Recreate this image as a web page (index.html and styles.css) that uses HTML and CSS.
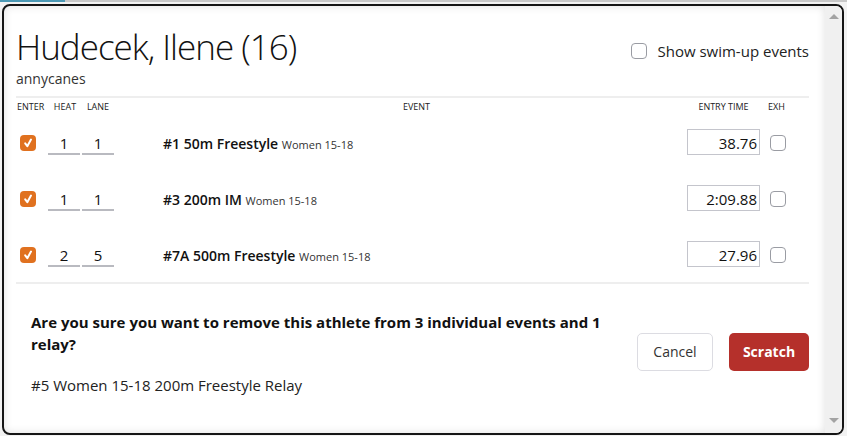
FILE: index.html
```html
<!DOCTYPE html>
<html lang="en">
<head>
    <meta charset="UTF-8">
    <meta name="viewport" content="width=device-width, initial-scale=1.0">
    <title>Scratch Athlete</title>
    <link rel="stylesheet" href="styles.css">
</head>
<body>
    <div class="topbar"><span class="topbar-accent"></span></div>

    <div class="window">
        <div class="modal">
            <div class="modal-head">
                <div>
                    <h1 class="athlete-name">Hudecek, Ilene (16)</h1>
                    <div class="team">annycanes</div>
                </div>
                <label class="swimup"><span class="box"></span>Show swim-up events</label>
            </div>

            <div class="entries">
                <div class="entry-row header">
                    <span class="col-enter">Enter</span>
                    <span class="col-center">Heat</span>
                    <span class="col-center">Lane</span>
                    <span></span>
                    <span class="col-event">Event</span>
                    <span class="col-center">Entry Time</span>
                    <span class="col-exh">Exh</span>
                </div>

                <div class="entry-row">
                    <span class="check checked"><svg viewBox="0 0 16 16"><path d="M5.2 8.4 L7.3 11.2 L11 4.6"/></svg></span>
                    <input class="seed heat" type="text" value="1">
                    <input class="seed" type="text" value="1">
                    <span></span>
                    <span class="event-name">#1 50m Freestyle <small>Women 15-18</small></span>
                    <input class="entry-time" type="text" value="38.76">
                    <span class="check exh"></span>
                </div>

                <div class="entry-row">
                    <span class="check checked"><svg viewBox="0 0 16 16"><path d="M5.2 8.4 L7.3 11.2 L11 4.6"/></svg></span>
                    <input class="seed heat" type="text" value="1">
                    <input class="seed" type="text" value="1">
                    <span></span>
                    <span class="event-name">#3 200m IM <small>Women 15-18</small></span>
                    <input class="entry-time" type="text" value="2:09.88">
                    <span class="check exh"></span>
                </div>

                <div class="entry-row">
                    <span class="check checked"><svg viewBox="0 0 16 16"><path d="M5.2 8.4 L7.3 11.2 L11 4.6"/></svg></span>
                    <input class="seed heat" type="text" value="2">
                    <input class="seed" type="text" value="5">
                    <span></span>
                    <span class="event-name">#7A 500m Freestyle <small>Women 15-18</small></span>
                    <input class="entry-time" type="text" value="27.96">
                    <span class="check exh"></span>
                </div>
            </div>

            <div class="confirm">
                <div class="confirm-text">
                    <p class="question">Are you sure you want to remove this athlete from 3 individual events and 1 relay?</p>
                    <p class="relay">#5 Women 15-18 200m Freestyle Relay</p>
                </div>
                <div class="actions">
                    <button class="btn btn-cancel">Cancel</button>
                    <button class="btn btn-scratch">Scratch</button>
                </div>
            </div>
        </div>

        <div class="scrollbar">
            <span class="arrow up"></span>
            <span class="arrow down"></span>
        </div>
    </div>
</body>
</html>
```

FILE: styles.css
```css
* {
    box-sizing: border-box;
}

body {
    margin: 0;
    padding: 0;
    background-color: #f2f2f2;
    font-family: "Open Sans", "Noto Sans", sans-serif;
    color: #222;
}

.topbar {
    height: 2px;
    background-color: #c8c8c8;
    display: flex;
}

.topbar-accent {
    width: 65px;
    background-color: #4b98b4;
}

.window {
    margin: 2px 0 0 2px;
    width: 842px;
    height: 431px;
    border: 2px solid #151515;
    border-radius: 8px;
    background-color: #fff;
    display: flex;
    overflow: hidden;
}

.modal {
    flex: 1;
    padding: 21px 16px 0 12px;
    box-shadow: inset 0 0 8px rgba(0, 0, 0, 0.13);
}

/* header */
.modal-head {
    display: flex;
    justify-content: space-between;
    align-items: flex-start;
    padding-bottom: 8px;
    border-bottom: 2px solid #eee;
}

.athlete-name {
    margin: 0;
    font-size: 35px;
    line-height: 40px;
    font-weight: 300;
    letter-spacing: -1px;
    color: #111;
}

.team {
    margin-top: 3px;
    font-size: 14px;
    line-height: 18px;
    color: #333;
}

.swimup {
    display: flex;
    align-items: center;
    gap: 10px;
    margin-top: 13px;
    font-size: 15px;
    line-height: 22px;
    color: #222;
}

.swimup .box {
    width: 16px;
    height: 16px;
    border: 1.5px solid #9a9ca3;
    border-radius: 4px;
}

/* entries */
.entries {
    border-bottom: 2px solid #eee;
}

.entry-row {
    display: grid;
    grid-template-columns: 32px 34px 32px 49px 1fr 73px 49px;
    align-items: center;
    height: 56px;
}

.entry-row.header {
    height: 16px;
    font-size: 9px;
    text-transform: uppercase;
    color: #222;
}

.col-enter {
    padding-left: 1px;
}

.col-center {
    text-align: center;
}

.col-event {
    text-align: center;
    padding-right: 17px;
}

.col-exh {
    padding-left: 8px;
}

.check {
    width: 16px;
    height: 16px;
    border-radius: 4px;
    margin-top: 1px;
}

.check.checked {
    margin-left: 4px;
    background-color: #e0711f;
}

.check svg {
    display: block;
    width: 16px;
    height: 16px;
    fill: none;
    stroke: #fff;
    stroke-width: 2;
    stroke-linecap: round;
    stroke-linejoin: round;
}

.check.exh {
    margin-left: 10px;
    border: 1.5px solid #9a9ca3;
}

.seed {
    width: 32px;
    height: 26px;
    padding: 4px 0 0;
    border: none;
    border-bottom: 2px solid #b9bac0;
    background: transparent;
    font-family: inherit;
    font-size: 15px;
    color: #111;
    text-align: center;
}

.event-name {
    padding-top: 2px;
    font-size: 14px;
    font-weight: 600;
    color: #111;
}

.event-name small {
    font-size: 11px;
    font-weight: 400;
    color: #333;
}

.entry-time {
    width: 73px;
    height: 26px;
    padding: 2px 2px 0 0;
    border: 1px solid #c4c5cc;
    font-family: inherit;
    font-size: 15px;
    color: #111;
    text-align: right;
}

/* confirmation */
.confirm {
    display: flex;
    align-items: center;
    padding: 27px 0 0 15px;
}

.confirm-text {
    flex: 1;
    padding-right: 16px;
}

.question {
    margin: 0;
    font-size: 15px;
    line-height: 22px;
    font-weight: 700;
    color: #111;
}

.relay {
    margin: 19px 0 0;
    font-size: 15px;
    line-height: 22px;
    color: #222;
}

.actions {
    display: flex;
    gap: 16px;
    margin-top: -4px;
}

.btn {
    height: 38px;
    border-radius: 5px;
    font-family: inherit;
    font-size: 14px;
}

.btn-cancel {
    width: 76px;
    background-color: #fff;
    border: 1px solid #dcdce2;
    color: #333;
}

.btn-scratch {
    width: 80px;
    background-color: #b5302b;
    border: none;
    color: #fff;
    font-weight: 700;
}

/* fake scrollbar */
.scrollbar {
    width: 17px;
    background-color: #f0f0f0;
    display: flex;
    flex-direction: column;
    justify-content: space-between;
    align-items: center;
    padding: 8px 0 10px;
}

.arrow {
    width: 0;
    height: 0;
    border-left: 5px solid transparent;
    border-right: 5px solid transparent;
}

.arrow.up {
    border-bottom: 5px solid #a3a3a3;
}

.arrow.down {
    border-top: 5px solid #a3a3a3;
}
```
